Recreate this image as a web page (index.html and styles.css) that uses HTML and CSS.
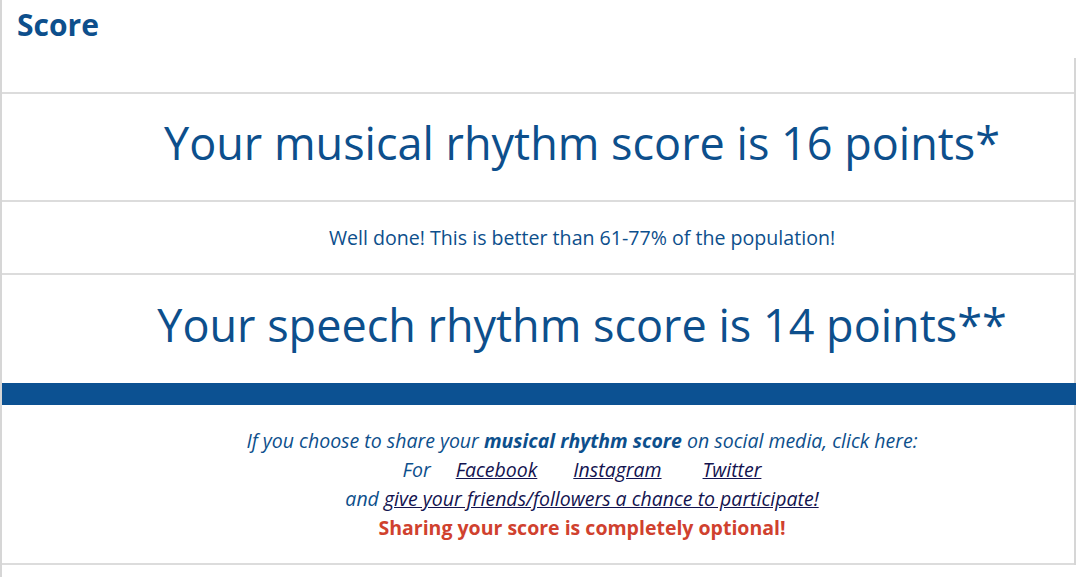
FILE: index.html
```html
<!DOCTYPE html>
<html>
<head>
<meta charset="utf-8">
<link rel="stylesheet" href="styles.css">
</head>
<body>
<div class="page">
  <h1 class="title">Score</h1>
  <div class="panel">
    <div class="top-gap"></div>
    <div class="row row-score">
      <div class="score">Your musical rhythm score is 16 points*</div>
    </div>
    <div class="row row-note">
      <div class="note">Well done! This is better than 61-77% of the population!</div>
    </div>
    <div class="row row-score2">
      <div class="score">Your speech rhythm score is 14 points**</div>
    </div>
    <div class="bar"></div>
    <div class="row row-share">
      <p class="share">If you choose to share your <b>musical rhythm score</b> on social media, click here:</p>
      <p class="share">For <a href="#" class="link l1">Facebook</a><a href="#" class="link l2">Instagram</a><a href="#" class="link l3">Twitter</a></p>
      <p class="share">and <a href="#" class="link">give your friends/followers a chance to participate!</a></p>
      <p class="optional">Sharing your score is completely optional!</p>
    </div>
  </div>
</div>
</body>
</html>
```
FILE: styles.css
```css
html, body {
  margin: 0;
  padding: 0;
  background: #ffffff;
}
body {
  font-family: "Open Sans", "Noto Sans", sans-serif;
  color: #0d4f8c;
}
.page {
  width: 1076px;
  height: 577px;
  overflow: hidden;
  box-sizing: border-box;
  border-left: 2px solid #d6d6d6;
}
.title {
  margin: 0;
  padding: 5px 0 0 15px;
  height: 58px;
  box-sizing: border-box;
  font-size: 30px;
  font-weight: 700;
  color: #0d4f8c;
  line-height: 40px;
}
.panel {
  border-right: 2px solid #d6d6d6;
}
.top-gap {
  height: 34px;
  border-bottom: 2px solid #dcdcdc;
}
.row {
  display: flex;
  flex-direction: column;
  align-items: center;
  justify-content: center;
  padding-left: 88px;
  text-align: center;
  box-sizing: border-box;
}
.row-score {
  height: 108px;
  padding-bottom: 8px;
  border-bottom: 2px solid #dcdcdc;
}
.row-note {
  height: 73px;
  border-bottom: 2px solid #dcdcdc;
}
.row-score2 {
  height: 108px;
  padding-bottom: 8px;
}
.score {
  font-size: 45px;
  line-height: 56px;
  color: #0d4f8c;
}
.note {
  font-size: 19.6px;
  color: #0d4f8c;
}
.bar {
  height: 22px;
  margin-right: -2px;
  background: #0c5192;
}
.row-share {
  height: 160px;
  border-bottom: 2px solid #dcdcdc;
  justify-content: flex-start;
  padding-top: 21px;
}
.share {
  margin: 0;
  font-size: 19.5px;
  line-height: 29px;
  font-style: italic;
  color: #0d4f8c;
}
.share b {
  font-weight: 700;
}
.link {
  color: #13134f;
  text-decoration: underline;
}
.l1 { margin-left: 20px; }
.l2 { margin-left: 36px; }
.l3 { margin-left: 41px; }
.optional {
  margin: 0;
  font-size: 19.5px;
  line-height: 29px;
  font-weight: 700;
  color: #d0412e;
}
```
